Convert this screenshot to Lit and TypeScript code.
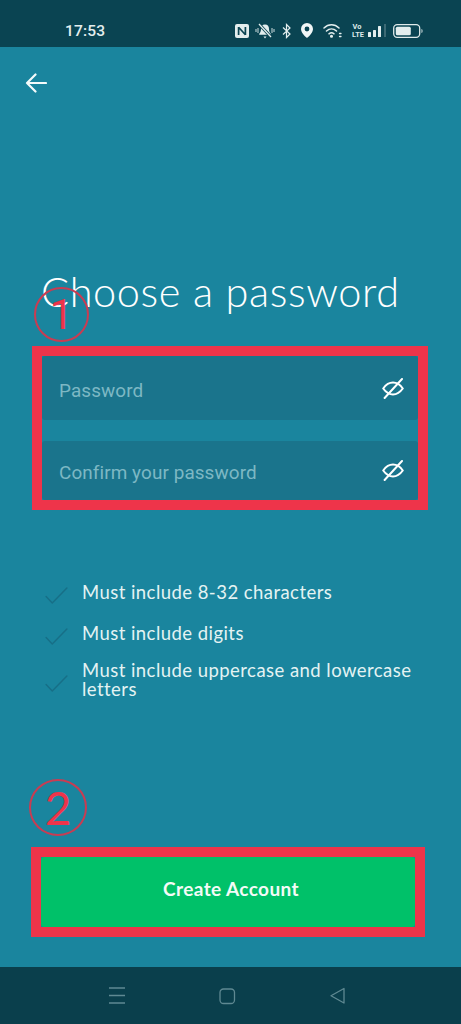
import { LitElement, html, css, svg } from "lit";
import { customElement } from "lit/decorators.js";

const eye = html`<svg class="eye" viewBox="0 0 22 21" fill="none" stroke="#fff" stroke-width="2" stroke-linecap="round" stroke-linejoin="round"><path d="M1.200 10.500C4 6.600 7.500 4.600 11 4.600s7 2 9.800 5.900c-2.800 3.900-6.300 5.900-9.800 5.900s-7-2-9.800-5.900z"/><path d="M2.600 20 20 1"/></svg>`;
const check = html`<svg class="check" viewBox="0 0 24 18" fill="none" stroke="#176f87" stroke-width="1.500" stroke-linecap="round" stroke-linejoin="round"><path d="M1 10l6.500 7L23 1"/></svg>`;

@customElement("app-root")
export class AppRoot extends LitElement {
  static styles = css`
    :host { display: block; width: 461px; height: 1024px; overflow: hidden; position: relative; background: #1a859e; font-family: Lato, "Open Sans", sans-serif; }
    .page { display: flex; flex-direction: column; height: 1024px; }
    .status { height: 47px; flex: none; background: #0a4452; display: flex; align-items: center; color: #e3eeee; padding: 14px 38px 0 65px; box-sizing: border-box; }
    .time { font: 500 15.500px Roboto, sans-serif; letter-spacing: .2px; width: 173px; }
    .icons { display: flex; align-items: center; }
    .icons svg { display: block; flex: none; }
    .volte { font: 700 7.400px/7.400px Roboto, sans-serif; width: 10px; text-align: center; margin: 0 6px 0 10px; color: #dfeaea; }
    main { flex: 1; display: flex; flex-direction: column; min-height: 0; }
    .back { margin: 26px 0 0 25px; width: 22px; height: 20px; display: block; }
    h1 { margin: 172px 0 0 41px; font: 300 41.500px/52px Lato, sans-serif; color: #fff; letter-spacing: .6px; white-space: nowrap; }
    .annot { border: 10px solid #ee344a; box-sizing: border-box; }
    .form { margin: 29px 0 0 32px; width: 396px; height: 164px; display: flex; flex-direction: column; gap: 21px; }
    .field { background: #1a748c; border-radius: 3px; display: flex; align-items: center; justify-content: space-between; padding: 0 14px 0 17px; color: #7db8c4; font: 400 18.900px Roboto, sans-serif; letter-spacing: .1px; }
    .f1 { height: 64px; padding-top: 4px; box-sizing: border-box; }
    .f2 { flex: 1; padding-top: 4px; box-sizing: border-box; }
    .eye { width: 22px; height: 21px; position: relative; top: -2px; }
    ul { list-style: none; margin: 71px 0 0 45px; padding: 0; width: 375px; display: flex; flex-direction: column; color: #e4f3f3; font: 400 18.500px/19px Lato, sans-serif; letter-spacing: .45px; }
    li { display: flex; align-items: center; gap: 14px; }
    .i1 { height: 22px; margin-bottom: 19px; }
    .i2 { height: 22px; margin-bottom: 17px; }
    .check { width: 23px; height: 17px; flex: none; position: relative; top: 3px; }
    .cta { margin: 148px 0 0 31px; width: 394px; height: 90px; }
    .cta button { width: 100%; height: 100%; border: 0; padding: 0 0 7px 6px; background: #00c169; color: #f4fbf7; border-radius: 3px; font: 700 19px Lato, sans-serif; letter-spacing: .4px; display: block; }
    .nav { height: 57px; flex: none; background: #0a3f4c; }
    .nb { position: absolute; top: 0; left: 0; }
    .badge { position: absolute; border: 2px solid #c93c52; border-radius: 50%; box-sizing: border-box; display: flex; align-items: center; justify-content: center; color: #ee344a; }
    .b1 { left: 34px; top: 287px; width: 55px; height: 55px; font: 400 42px Roboto, sans-serif; }
    .b2 { left: 29px; top: 779px; width: 58px; height: 57px; font: 400 46px/46px Lato, sans-serif; }
  `;

  render() {
    return html`
      <div class="page">
        <div class="status">
          <span class="time">17:53</span>
          <div class="icons">
            <svg width="14" height="14" viewBox="0 0 14 14"><rect width="14" height="14" rx="2" fill="#e3eeee"/><path d="M3.600 3v8M3.600 3.200l6.800 7.600M10.400 3v8" fill="none" stroke="#0a4452" stroke-width="1.700"/></svg>
            <svg width="20" height="18" viewBox="0 0 20 18" style="margin-left:6px" fill="#e3eeee"><path d="M10 2.500c-2.800 0-4 2-4 4.500 0 2.400-.7 3.600-1.800 4.800v1h11.600v-1C14.700 10.600 14 9.400 14 7c0-2.500-1.200-4.500-4-4.500zM8.500 14.500h3l-1.500 2z"/><path d="M4 2l12 13" stroke="#0a4452" stroke-width="3"/><path d="M4 2l12 13" stroke="#e3eeee" stroke-width="1.300"/><path d="M1 7v3M3 6v5M17 6v5M19 7v3" stroke="#e3eeee" stroke-width=".9"/></svg>
            <svg width="9" height="16" viewBox="0 0 9 16" style="margin-left:7px" fill="none" stroke="#e3eeee" stroke-width="1.200"><path d="M1 4.500l7 6.500-3.500 3.500V1.500L8 5l-7 6.500"/></svg>
            <svg width="12" height="15" viewBox="0 0 12 15" style="margin-left:10px"><path fill-rule="evenodd" d="M6 0a6 6 0 0 1 6 6c0 3.600-4 7.400-6 9C4 13.400 0 9.600 0 6a6 6 0 0 1 6-6zm0 3.600a2.400 2.400 0 1 0 0 4.800 2.400 2.400 0 0 0 0-4.800z" fill="#f0f6f6"/></svg>
            <svg width="19" height="15" viewBox="0 0 19 15" style="margin-left:10px" fill="none" stroke="#e3eeee" stroke-width="1.500" stroke-linecap="round"><path d="M1 5c4.400-4.200 10.600-4.200 15 0M3.500 8c3-2.800 7-2.800 10 0M6 10.800c1.600-1.300 3.400-1.300 5 0"/><circle cx="8.500" cy="13.300" r=".8" fill="#e3eeee"/><path d="M16.500 10.500h1.500M16.500 13.500h1.500" stroke-width="1.300"/></svg>
            <span class="volte">Vo<br />LTE</span>
            <svg width="20" height="14" viewBox="0 0 20 14" fill="#e3eeee"><rect x="0" y="8" width="3" height="5" rx=".5"/><rect x="5" y="6" width="3" height="7" rx=".5"/><rect x="10" y="2" width="3" height="11" rx=".5"/><rect x="16" y="0" width="2" height="13" fill="#3c6a75"/></svg>
            <svg width="30" height="14" viewBox="0 0 30 14" style="margin-left:5px"><rect x=".7" y=".7" width="26" height="12.600" rx="3.500" fill="none" stroke="#dfeaea" stroke-width="1.300"/><rect x="2.800" y="2.800" width="15" height="8.400" rx="1.500" fill="#e3eeee"/><path d="M28.500 5v4c.8-.3 1-1 1-2s-.2-1.700-1-2z" fill="#dfeaea"/></svg>
          </div>
        </div>
        <main>
          <svg class="back" viewBox="0 0 22 20" fill="none" stroke="#f4fbfb" stroke-width="2.200" stroke-linecap="round" stroke-linejoin="round"><path d="M21 10H2M10.500 1.500 2 10l8.500 8.500"/></svg>
          <h1>Choose a password</h1>
          <div class="annot form">
            <div class="field f1"><span>Password</span>${eye}</div>
            <div class="field f2"><span>Confirm your password</span>${eye}</div>
          </div>
          <ul>
            <li class="i1">${check}<span>Must include 8-32 characters</span></li>
            <li class="i2">${check}<span>Must include digits</span></li>
            <li>${check}<span>Must include uppercase and lowercase letters</span></li>
          </ul>
          <div class="annot cta"><button>Create Account</button></div>
        </main>
        <div class="nav"></div>
      </div>
      <svg class="nb" width="461" height="1024" viewBox="0 0 461 1024" fill="none" stroke="#5f8992" stroke-width="1.300" aria-hidden="true">
        ${svg`<path d="M109 988h16M109 995.500h16M109 1003h16"/><rect x="220" y="989" width="14.500" height="14.500" rx="3.500"/><path d="M344 988.500v14.500l-13-7.200z" stroke-linejoin="round"/>`}
      </svg>
      <div class="badge b1">1</div>
      <div class="badge b2">2</div>
    `;
  }
}
